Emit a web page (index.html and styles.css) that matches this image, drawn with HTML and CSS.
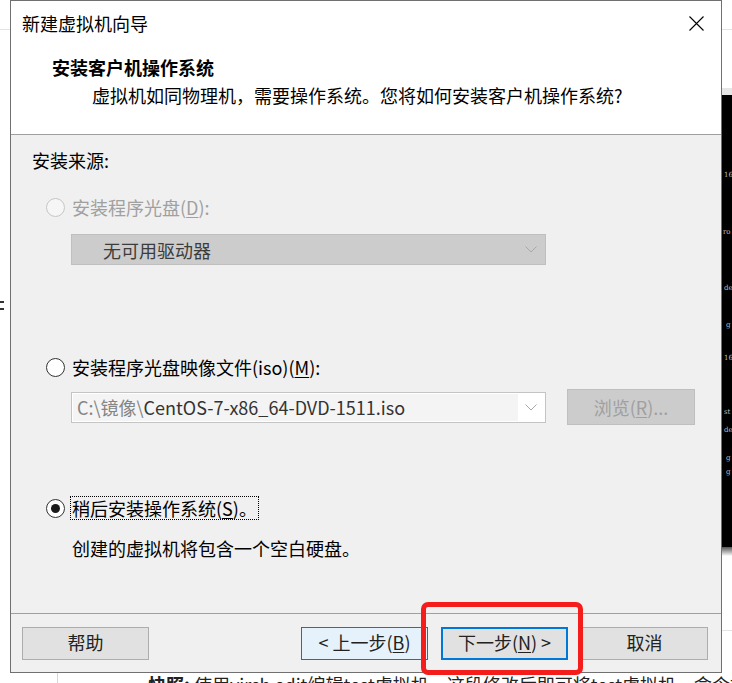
FILE: index.html
```html
<!DOCTYPE html>
<html lang="zh-CN">
<head>
<meta charset="utf-8">
<title>新建虚拟机向导</title>
<link rel="stylesheet" href="styles.css">
</head>
<body>
<div class="desk">
  <div class="bg-line-top"></div>
  <div class="bg-right-cap"></div>
  <div class="term">
    <span class="t t1">16</span>
    <span class="t t2">ro</span>
    <span class="t t3">de</span>
    <span class="t t4">g</span>
    <span class="t t5">16</span>
    <span class="t t6">st</span>
    <span class="t t7">de</span>
    <span class="t t8">g</span>
    <span class="t t9">g</span>
  </div>
  <div class="term-fade"></div>
  <div class="bg-right-line"></div>
  <div class="bg-left-mark"><i></i><i></i></div>
  <div class="bg-vline"></div>
  <div class="bg-text"><b>快照:</b> 使用virsh edit编辑test虚拟机，这段修改后即可将test虚拟机，命令如</div>

  <div class="dialog">
    <div class="header">
      <div class="titlebar">
        <span class="title">新建虚拟机向导</span>
        <svg class="close" width="15" height="15" viewBox="0 0 15 15"><path d="M0.5 0.5 L14.5 14.5 M14.5 0.5 L0.5 14.5" stroke="#000" stroke-width="1.1" fill="none"/></svg>
      </div>
      <div class="heading">安装客户机操作系统</div>
      <div class="subtitle">虚拟机如同物理机，需要操作系统。您将如何安装客户机操作系统?</div>
    </div>

    <div class="body">
      <div class="group-label">安装来源:</div>

      <div class="radio-row row1">
        <span class="radio disabled"></span>
        <span class="label muted">安装程序光盘(<u>D</u>):</span>
      </div>
      <div class="select disabled-select">
        <span class="select-text">无可用驱动器</span>
        <svg class="chev" width="12" height="7" viewBox="0 0 12 7"><polyline points="0.5,0.5 6,6 11.5,0.5" fill="none" stroke="#a8a8a8" stroke-width="1"/></svg>
      </div>

      <div class="radio-row row2">
        <span class="radio"></span>
        <span class="label">安装程序光盘映像文件(iso)(<u>M</u>):</span>
      </div>
      <div class="iso-row">
        <div class="combo">
          <span class="combo-edit"><span class="path-dim">C:\镜像\</span>CentOS-7-x86_64-DVD-1511.iso</span>
          <svg class="chev" width="12" height="7" viewBox="0 0 12 7"><polyline points="0.5,0.5 6,6 11.5,0.5" fill="none" stroke="#a8a8a8" stroke-width="1"/></svg>
        </div>
        <div class="browse">浏览(<u>R</u>)...</div>
      </div>

      <div class="radio-row row3">
        <span class="radio checked"></span>
        <span class="label focus">稍后安装操作系统(<u>S</u>)。</span>
      </div>
      <div class="desc">创建的虚拟机将包含一个空白硬盘。</div>
    </div>

    <div class="footer">
      <div class="btn">帮助</div>
      <div class="btn hover back">&lt; 上一步(<u>B</u>)</div>
      <div class="btn default">下一步(<u>N</u>) &gt;</div>
      <div class="btn">取消</div>
    </div>
  </div>

  <div class="annot"></div>
</div>
</body>
</html>
```

FILE: styles.css
```css
* { box-sizing: border-box; }
html, body { margin: 0; padding: 0; }
body {
  width: 732px;
  height: 683px;
  overflow: hidden;
  background: #fff;
  font-family: "Noto Sans CJK SC", "Noto Sans", sans-serif;
  font-size: 18px;
  color: #000;
}
u { text-decoration: underline; text-underline-offset: 2px; text-decoration-thickness: 1px; }

.desk { position: relative; width: 732px; height: 683px; overflow: hidden; background: #fff; }

/* background bits of other windows */
.bg-line-top { position: absolute; left: 0; top: 29px; width: 732px; height: 1px; background: #e3e3e3; }
.bg-right-cap { position: absolute; left: 722px; top: 88px; width: 10px; height: 7px; background: #e6e6e6; }
.term { position: absolute; left: 722px; top: 95px; width: 10px; height: 452px; background: #000; overflow: hidden; }
.t { position: absolute; left: 2px; font-family: "DejaVu Serif", serif; font-size: 7px; line-height: 8px; color: #bdbdbd; white-space: nowrap; }
.t1 { top: 76px; }
.t2 { top: 133px; left: 1px; }
.t3 { top: 189px; }
.t4 { top: 226px; left: 4px; }
.t5 { top: 259px; }
.t6 { top: 313px; }
.t7 { top: 331px; }
.t8 { top: 359px; left: 4px; }
.t9 { top: 373px; left: 4px; }
.term-fade { position: absolute; left: 722px; top: 547px; width: 10px; height: 9px; background: linear-gradient(#555, #fff); }
.bg-right-line { position: absolute; left: 722px; top: 630px; width: 10px; height: 1px; background: #e3e3e3; }
.bg-left-mark { position: absolute; left: 0; top: 301px; width: 4px; display: flex; flex-direction: column; gap: 5px; }
.bg-left-mark i { display: block; height: 2px; background: #333; }
.bg-vline { position: absolute; left: 57px; top: 673px; width: 1px; height: 10px; background: #d8d8d8; }
.bg-text { position: absolute; left: 148px; top: 672px; line-height: 24px; white-space: nowrap; color: #222; }

/* dialog window */
.dialog {
  position: absolute;
  left: 10px;
  top: 0;
  width: 712px;
  height: 673px;
  border: 1px solid #707070;
  background: #f0f0f0;
  display: flex;
  flex-direction: column;
}
.header { height: 134px; flex: none; background: #fff; border-bottom: 1px solid #a0a0a0; }
.titlebar { height: 44px; display: flex; align-items: center; justify-content: space-between; padding: 0 17px 0 11px; }
.title { line-height: 24px; }
.close { display: block; }
.heading { margin-top: 10px; padding-left: 41px; line-height: 24px; font-weight: bold; }
.subtitle { margin-top: 4px; padding-left: 81px; line-height: 24px; }

.body {
  height: 479px;
  flex: none;
  border-bottom: 1px solid #a0a0a0;
  padding: 13px 0 0 21px;
  display: flex;
  flex-direction: column;
  align-items: flex-start;
}
.group-label { line-height: 24px; }
.radio-row { display: flex; align-items: center; height: 24px; margin-left: 14px; }
.row1 { margin-top: 23px; }
.row2 { margin-top: 90px; }
.row3 { margin-top: 71px; }
.radio {
  width: 19px; height: 19px; flex: none;
  border-radius: 50%;
  border: 1px solid #333;
  background: #fff;
  display: flex; align-items: center; justify-content: center;
}
.radio.disabled { border-color: #c6c6c6; background: #f6f6f6; }
.radio.checked::after { content: ""; width: 9px; height: 9px; border-radius: 50%; background: #1a1a1a; }
.label { margin-left: 5px; line-height: 22px; padding: 0 1px; border: 1px solid transparent; }
.label.muted { color: #a0a0a0; }
.label.focus { border: 1px dotted #000; padding: 0 1px 0 1px; }

.select {
  margin-top: 15px;
  margin-left: 39px;
  width: 475px;
  height: 31px;
  display: flex;
  align-items: center;
  justify-content: space-between;
  padding: 0 8px 0 31px;
}
.disabled-select { background: #cccccc; border: 1px solid #bfbfbf; }
.select-text { color: #3c3c3c; line-height: 24px; }
.chev { display: block; }

.iso-row { margin-top: 10px; margin-left: 39px; display: flex; align-items: center; height: 36px; }
.combo {
  width: 475px; height: 31px;
  border: 1px solid #c4c4c4;
  background: #fff;
  display: flex; align-items: center;
  padding: 1px 8px 1px 1px;
}
.combo-edit {
  width: 445px; height: 100%;
  background: #f4f4f4;
  padding-left: 4px;
  line-height: 27px;
  color: #333;
  white-space: nowrap;
  overflow: hidden;
}
.path-dim { color: #858585; }
.combo .chev { margin-left: auto; }
.browse {
  margin-left: 21px;
  width: 128px; height: 36px;
  background: #cccccc;
  border: 1px solid #bfbfbf;
  color: #a0a0a0;
  display: flex; align-items: center; justify-content: center;
}

.desc { margin-top: 16px; margin-left: 40px; line-height: 24px; }

.footer {
  flex: 1;
  padding: 13px 13px 0 11px;
  display: flex;
  align-items: flex-start;
  gap: 13px;
}
.btn {
  width: 127px; height: 33px;
  background: #e1e1e1;
  border: 1px solid #adadad;
  color: #222;
  display: flex; align-items: center; justify-content: center;
  line-height: 24px;
  padding-bottom: 3px;
}
.btn.back { margin-left: auto; }
.btn.hover { background: #e5f1fb; border-color: #0078d7; }
.btn.default { border: 2px solid #0078d7; }

/* red annotation box */
.annot {
  position: absolute;
  left: 421px; top: 602px;
  width: 162px; height: 73px;
  border: 5px solid #f51c1c;
  border-radius: 7px;
}
```
